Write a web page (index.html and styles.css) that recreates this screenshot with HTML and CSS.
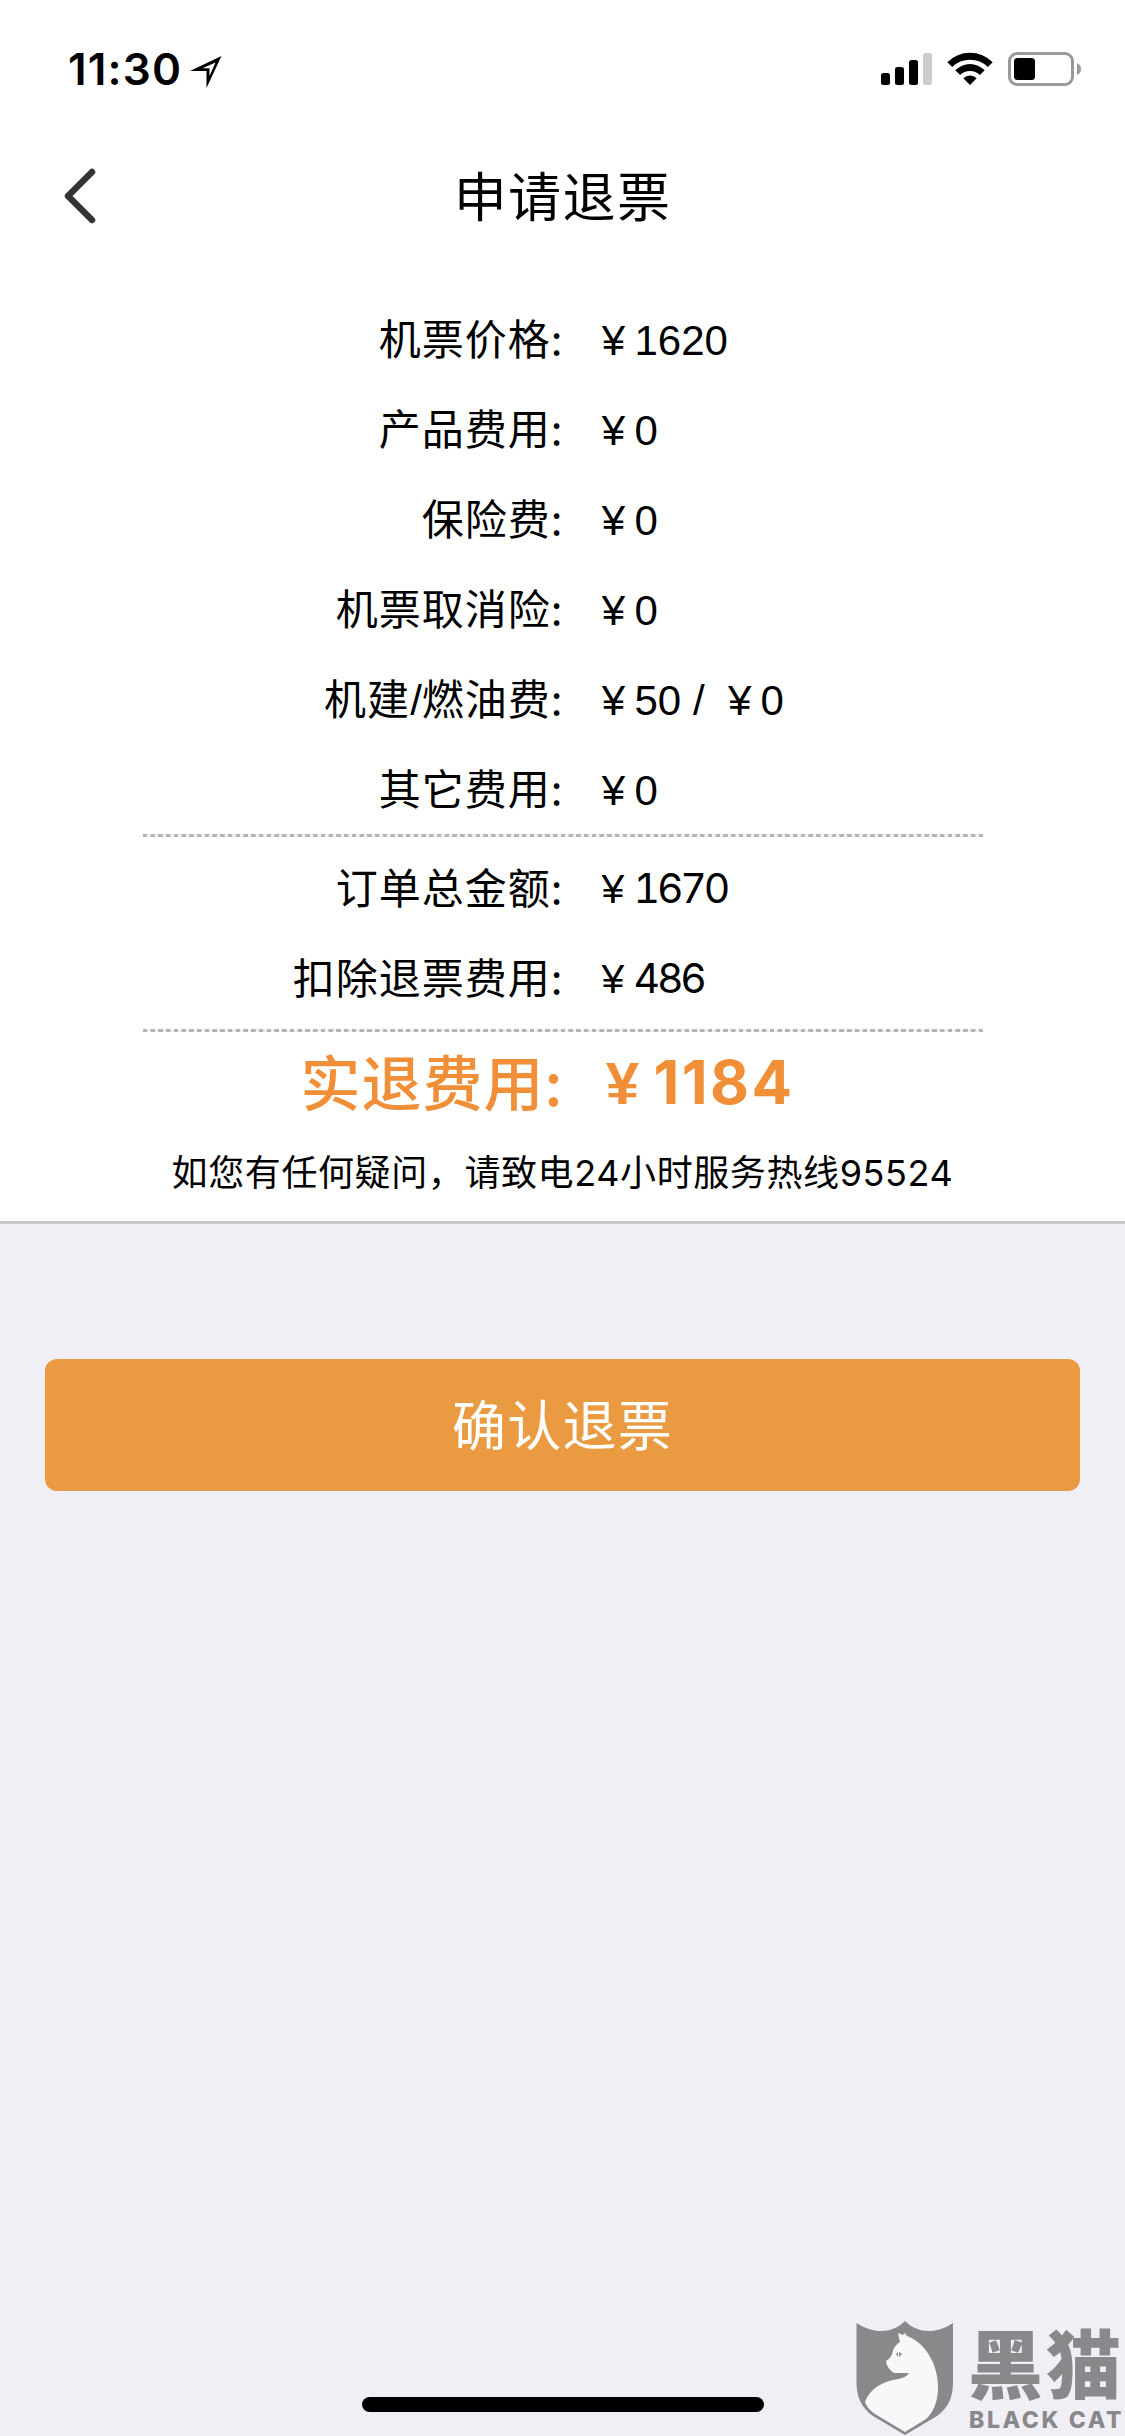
FILE: index.html
```html
<!DOCTYPE html>
<html lang="zh-CN">
  <head>
    <meta charset="UTF-8" />
    <title>申请退票</title>
    <link rel="stylesheet" href="styles.css">
  </head>
  <body>
    <div class="page">
      <!-- Status bar -->
      <div class="status-bar">
        <div class="status-left">
          <span class="time">11:30</span>
          <svg class="location" width="34" height="34" viewBox="0 0 34 34">
            <path fill="#000" fill-rule="evenodd" d="M32.500 1L1 16H17.500V33ZM26.500 7.500L20.500 21V13.300H13.500Z" />
          </svg>
        </div>
        <div class="status-right">
          <svg width="51" height="34" viewBox="0 0 51 34">
            <rect x="0" y="21" width="9" height="12" rx="2.500" />
            <rect x="14" y="15" width="9" height="18" rx="2.500" />
            <rect x="28" y="8" width="9" height="25" rx="2.500" />
            <rect x="42" y="1" width="9" height="32" rx="2.500" fill="#ccc" />
          </svg>
          <svg width="46" height="34" viewBox="0 0 46 34">
            <path d="M0.300 10.200A32 32 0 0 1 45.700 10.200L40.800 15A25.200 25.200 0 0 0 5.200 15Z" />
            <path d="M8.300 18.200A20.800 20.800 0 0 1 37.700 18.200L32.900 23A14 14 0 0 0 13.100 23Z" />
            <path d="M16.300 26.200A9.500 9.500 0 0 1 29.700 26.200L23 33Z" />
          </svg>
          <svg width="74" height="34" viewBox="0 0 74 34">
            <rect x="1.500" y="1.500" width="63" height="31" rx="7.500" fill="none" stroke="#999" stroke-width="3" />
            <rect x="6" y="6" width="21" height="22" rx="3.500" />
            <path d="M69 11Q73 13 73 17T69 23Z" fill="#999" />
          </svg>
        </div>
      </div>

      <!-- Title bar -->
      <div class="nav-bar">
        <svg class="back" width="32" height="56" viewBox="0 0 32 56">
          <path d="M28 4L4 28L28 52" fill="none" stroke="#333" stroke-width="6.500" stroke-linecap="round" stroke-linejoin="round" />
        </svg>
        <h1>申请退票</h1>
      </div>

      <!-- Price details -->
      <div class="detail">
        <div class="group">
          <div class="row"><div class="label">机票价格<i>:</i></div><div class="value"><b>¥</b>1620</div></div>
          <div class="row"><div class="label">产品费用<i>:</i></div><div class="value"><b>¥</b>0</div></div>
          <div class="row"><div class="label">保险费<i>:</i></div><div class="value"><b>¥</b>0</div></div>
          <div class="row"><div class="label">机票取消险<i>:</i></div><div class="value"><b>¥</b>0</div></div>
          <div class="row"><div class="label">机建<i>/</i>燃油费<i>:</i></div><div class="value"><b>¥</b>50 <span class="slash">/</span> <b>¥</b>0</div></div>
          <div class="row"><div class="label">其它费用<i>:</i></div><div class="value"><b>¥</b>0</div></div>
        </div>
        <div class="divider"></div>
        <div class="group summary">
          <div class="row"><div class="label">订单总金额<i>:</i></div><div class="value"><b>¥</b>1670</div></div>
          <div class="row"><div class="label">扣除退票费用<i>:</i></div><div class="value"><b>¥</b>486</div></div>
        </div>
        <div class="divider"></div>
        <div class="row total"><div class="label">实退费用<i>:</i></div><div class="value"><b>¥</b>1184</div></div>
        <p class="hint">如您有任何疑问，请致电24小时服务热线95524</p>
      </div>

      <button class="submit-btn">确认退票</button>

      <div class="home-bar"></div>

      <!-- Watermark -->
      <div class="watermark">
        <svg width="98" height="116" viewBox="0 0 98 116">
          <path fill="#8a888b" d="M0.500 3C17 14 36 14 49 1C62 14 81 14 97 3V62C97 78 92 88 81 96L49 115L17 96C6 88 0.500 78 0.500 62Z" />
          <path fill="#f8f8fb" d="M44 22L42 13L47 15L49 13L51 16C70 23 82 45 82 67C82 82 77 93 70 99L49 112L19 94C13 90 10 85 9 82C14 68 28 61 42 59C48 58 51 56 53 53H39C36 53 30 46 30 41C34 39 37 34 37 30C39 26 41 24 44 22Z" />
          <path fill="#8a888b" d="M40 34L42 32V37ZM43 32L46 34L43 37Z" />
        </svg>
        <div class="brand">
          <div class="brand-cn">黑猫</div>
          <div class="brand-en">BLACK CAT</div>
        </div>
      </div>
    </div>
  </body>
</html>
```
FILE: styles.css
```css
* {
  margin: 0;
  padding: 0;
  box-sizing: border-box;
}

body {
  background-color: #f0eff5;
  font-family: "Noto Sans CJK SC", sans-serif;
  color: #000;
}

.page {
  position: relative;
  width: 1125px;
  height: 2436px;
  overflow: hidden;
}

svg {
  display: block;
}

/* --- Status bar --- */
.status-bar {
  height: 132px;
  padding: 52px 43px 0 68px;
  display: flex;
  justify-content: space-between;
  background-color: #fff;
}

.status-left,
.status-right {
  display: flex;
  height: 34px;
  align-items: center;
}

.status-right {
  gap: 15px;
}

.time {
  width: 121px;
  font: 600 44px/34px "Inter", sans-serif;
  letter-spacing: 1.2px;
}

.location {
  margin-top: 6px;
}

/* --- Title bar --- */
.nav-bar {
  height: 132px;
  padding: 0 64px 4px;
  display: grid;
  grid-template-columns: 32px 1fr 32px;
  align-items: center;
  background-color: #fff;
}

.nav-bar h1 {
  font-size: 53px;
  font-weight: 400;
  line-height: 124px;
  letter-spacing: 1.4px;
  text-align: center;
  padding-bottom: 4px;
}

/* --- Price details --- */
.detail {
  height: 960px;
  padding-top: 30px;
  background-color: #fff;
  border-bottom: 3px solid #c8c8c9;
}

.row {
  display: grid;
  grid-template-columns: 1fr 1fr;
  column-gap: 30px;
  height: 90px;
  margin-right: -30px;
  font-size: 42px;
  white-space: nowrap;
}

.label {
  line-height: 86px;
  text-align: right;
  letter-spacing: 1px;
}

.label i {
  font-family: "Liberation Sans", sans-serif;
  font-style: normal;
  letter-spacing: 0;
}

.label i:last-child {
  font-family: inherit;
}

.value {
  font-family: "Liberation Sans", sans-serif;
  line-height: 93px;
}

.value b {
  display: inline-block;
  width: 1em;
  font-family: "Liberation Sans", sans-serif;
  font-weight: inherit;
  letter-spacing: 0;
  text-align: center;
}

.slash {
  display: inline-block;
  width: 14px;
}

.summary {
  padding: 6px 0;
}

.summary .value {
  font-family: "Inter", sans-serif;
  font-size: 41px;
  font-variant-numeric: tabular-nums;
  line-height: 91px;
  letter-spacing: -3.2px;
}

.divider {
  width: 840px;
  height: 3px;
  margin: 0 auto;
  background: repeating-linear-gradient(to right, #b4b4b4 0, #b4b4b4 4px, #f2f2f2 4.5px, #f2f2f2 7.3px, #b4b4b4 7.74px);
}

.total {
  height: 101px;
  font-size: 60px;
  font-weight: 500;
  color: #f18f38;
}

.total .label {
  line-height: 95px;
}

.total .value {
  font-family: "Inter", sans-serif;
  font-weight: 700;
  line-height: 101px;
  letter-spacing: 2.4px;
}

.total .value b {
  margin-right: 1px;
}

.hint {
  font-family: "Inter", "Noto Sans CJK SC", sans-serif;
  font-size: 36px;
  line-height: 81px;
  letter-spacing: 0.6px;
  text-align: center;
  white-space: nowrap;
}

/* --- Submit --- */
.submit-btn {
  display: block;
  width: 1035px;
  height: 132px;
  margin: 135px auto 0;
  padding-bottom: 4px;
  border: none;
  border-radius: 12px;
  background-color: #ea9b41;
  color: #fff;
  font-family: inherit;
  font-size: 54px;
  letter-spacing: 1.2px;
  line-height: 128px;
}

/* --- Overlays at the bottom of the screen --- */
.home-bar {
  position: absolute;
  left: 362px;
  bottom: 24px;
  width: 402px;
  height: 15px;
  border-radius: 8px;
  background-color: #000;
}

.watermark {
  position: absolute;
  right: 0;
  bottom: 0;
  width: 269px;
  height: 116px;
  display: flex;
  color: #8a888b;
}

.brand {
  padding: 8px 0 0 14px;
  white-space: nowrap;
}

.brand-cn {
  height: 80px;
  font-size: 75px;
  font-weight: 900;
  line-height: 65px;
  letter-spacing: 3px;
}

.brand-en {
  font: 800 23px/24px "Inter", sans-serif;
  letter-spacing: 2.6px;
  padding-left: 1px;
}
```
